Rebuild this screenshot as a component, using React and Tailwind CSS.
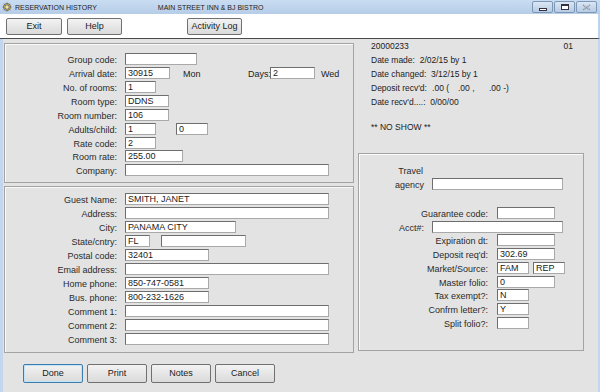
import React from 'react';

const FONT = "font-['Liberation_Sans',Arial,sans-serif]";

// sunken text box, like the old win32 edit control
const Field = ({ w, value = '' }) => (
  <div
    className={`${w} h-[12px] shrink-0 border border-t-[#6e6e6e] border-l-[#6e6e6e] border-b-[#a9a9a9] border-r-[#a9a9a9] bg-white pl-[2px] text-[9px] leading-[10px] text-[#1b1b1b] whitespace-pre overflow-hidden`}
  >
    {value}
  </div>
);

const Row = ({ label, lw = 'w-[112px]', gap = 'ml-[8px]', h = 'h-[14px]', children }) => (
  <div className={`flex ${h} items-start`}>
    <div className={`${lw} shrink-0 pt-[1px] text-right text-[9px] leading-[12px] text-[#2a2a2a] whitespace-nowrap`}>{label}</div>
    <div className={`${gap} flex items-start`}>{children}</div>
  </div>
);

const WinButton = ({ children, size = 'h-[19px] w-[60px]', className = 'border-[#707070]' }) => (
  <button
    type="button"
    className={`flex ${size} items-center justify-center rounded-[2px] border bg-linear-to-b from-[#f3f3f3] to-[#dadada] text-[9px] text-[#1b1b1b] ${className}`}
  >
    {children}
  </button>
);

const TitleIcon = () => (
  <svg width="10" height="10" viewBox="0 0 10 10">
    <circle cx="5" cy="5" r="3.6" fill="#d9b84a" stroke="#7a6420" strokeWidth="0.8" />
    <path d="M5 0.5 V9.5 M0.5 5 H9.5 M1.8 1.8 L8.2 8.2 M8.2 1.8 L1.8 8.2" stroke="#5a6fa8" strokeWidth="0.9" />
    <circle cx="5" cy="5" r="1.5" fill="#f4e29a" />
  </svg>
);

const CaptionBtn = ({ children }) => (
  <div className="flex h-[12px] w-[21px] items-center justify-center rounded-[2px] border border-[#7d97b6] bg-linear-to-b from-[#dbe7f4] to-[#b7cbe3]">
    {children}
  </div>
);

export default function App() {
  return (
    <div className={`${FONT} relative h-[392px] w-[600px] overflow-hidden bg-[#e3e3e3] text-[#222]`}>
      {/* Title bar */}
      <div className="flex h-[14px] items-center bg-linear-to-b from-[#c9dcf1] to-[#b6cde8] pl-[2px] pr-[3px]">
        <TitleIcon />
        <span className="ml-[3px] text-[7px] leading-none text-[#1d1d1d]">RESERVATION HISTORY</span>
        <span className="ml-[61px] text-[7px] leading-none text-[#1d1d1d]">MAIN STREET INN &amp; BJ BISTRO</span>
        <div className="ml-auto flex gap-[1px]">
          <CaptionBtn>
            <div className="mt-[4px] h-[3px] w-[8px] border border-[#334] bg-white" />
          </CaptionBtn>
          <CaptionBtn>
            <div className="h-[6px] w-[8px] border border-[#334] border-t-2 bg-white" />
          </CaptionBtn>
          <CaptionBtn>
            <svg width="9" height="7" viewBox="0 0 9 7">
              <path d="M1 1 L8 6 M8 1 L1 6" stroke="#8d98a8" strokeWidth="1.6" strokeDasharray="1.2 0.6" />
            </svg>
          </CaptionBtn>
        </div>
      </div>

      {/* Toolbar */}
      <div className="flex h-[25px] items-start border-b border-[#4a4a4a] border-r-2 border-r-[#bcd3ec] bg-white pl-[6px] pt-[4px]">
        <WinButton size="h-[17px] w-[56px]">Exit</WinButton>
        <div className="ml-[5px]"><WinButton size="h-[17px] w-[55px]">Help</WinButton></div>
        <div className="ml-[65px]"><WinButton size="h-[17px] w-[55px]">Activity Log</WinButton></div>
      </div>

      {/* Main */}
      <div className="flex h-[353px] flex-col border-l-[3px] border-r-2 border-[#c2d6ed]">
        <div className="flex items-start">
          {/* left column */}
          <div className="ml-[1px] mt-[4px] flex w-[350px] flex-col gap-[3px]">
            <div className="h-[140px] border border-[#a3a3a3] shadow-[inset_1px_1px_0_#fafafa] pt-[9px]">
              <Row label="Group code:"><Field w="w-[72px]" /></Row>
              <Row label="Arrival date:">
                <Field w="w-[45px]" value="30915" />
                <span className="ml-[13px] w-[65px] pt-[1px] text-[9px] leading-[12px]">Mon</span>
                <span className="w-[22px] pt-[1px] text-[9px] leading-[12px]">Days:</span>
                <Field w="w-[45px]" value="2" />
                <span className="ml-[6px] pt-[1px] text-[9px] leading-[12px]">Wed</span>
              </Row>
              <Row label="No. of rooms:"><Field w="w-[31px]" value="1" /></Row>
              <Row label="Room type:"><Field w="w-[44px]" value="DDNS" /></Row>
              <Row label="Room number:"><Field w="w-[44px]" value="106" /></Row>
              <Row label="Adults/child:">
                <Field w="w-[31px]" value="1" />
                <div className="ml-[20px]"><Field w="w-[32px]" value="0" /></div>
              </Row>
              <Row label="Rate code:" h="h-[13px]"><Field w="w-[31px]" value="2" /></Row>
              <Row label="Room rate:"><Field w="w-[58px]" value="255.00" /></Row>
              <Row label="Company:"><Field w="w-[204px]" /></Row>
            </div>

            <div className="h-[167px] border border-[#a3a3a3] shadow-[inset_1px_1px_0_#fafafa] pt-[6px]">
              <Row label="Guest Name:"><Field w="w-[204px]" value="SMITH, JANET" /></Row>
              <Row label="Address:"><Field w="w-[204px]" /></Row>
              <Row label="City:"><Field w="w-[111px]" value="PANAMA CITY" /></Row>
              <Row label="State/cntry:">
                <Field w="w-[25px]" value="FL" />
                <div className="ml-[11px]"><Field w="w-[85px]" /></div>
              </Row>
              <Row label="Postal code:"><Field w="w-[84px]" value="32401" /></Row>
              <Row label="Email address:"><Field w="w-[204px]" /></Row>
              <Row label="Home phone:"><Field w="w-[84px]" value="850-747-0581" /></Row>
              <Row label="Bus. phone:"><Field w="w-[84px]" value="800-232-1626" /></Row>
              <Row label="Comment 1:"><Field w="w-[204px]" /></Row>
              <Row label="Comment 2:"><Field w="w-[204px]" /></Row>
              <Row label="Comment 3:"><Field w="w-[204px]" /></Row>
            </div>
          </div>

          {/* right column */}
          <div className="ml-[4px] flex w-[226px] flex-col">
            <div className="h-[114px] pl-[13px] text-[8.5px] leading-[14px] text-[#222]">
              <div className="flex">
                <span>20000233</span>
                <span className="ml-auto mr-[11px]">01</span>
              </div>
              <div className="whitespace-pre">Date made:  2/02/15 by 1</div>
              <div className="whitespace-pre">Date changed:  3/12/15 by 1</div>
              <div className="flex whitespace-pre">
                <span className="w-[54px]">Deposit recv'd:</span>
                <span className="w-[33px]">   .00 (</span>
                <span className="w-[31px]">.00 ,</span>
                <span>.00 -)</span>
              </div>
              <div className="whitespace-pre">Date recv'd....:  0/00/00</div>
              <div className="mt-[11px]">** NO SHOW **</div>
            </div>

            <div className="h-[198px] border border-[#a3a3a3] shadow-[inset_1px_1px_0_#fafafa] pt-[10px]">
              <div className="flex h-[28px] items-start">
                <div className="w-[65px] shrink-0 text-right text-[9px] leading-[14px] text-[#2a2a2a]">
                  <div className="pr-[1px]">Travel</div>
                  <div>agency</div>
                </div>
                <div className="ml-[8px] mt-[14px]"><Field w="w-[131px]" /></div>
              </div>
              <div className="mt-[15px]">
                <Row label="Guarantee code:" lw="w-[129px]" gap="ml-[9px]"><Field w="w-[58px]" /></Row>
                <Row label="Acct#:" lw="w-[65px]" gap="ml-[8px]" h="h-[13px]"><Field w="w-[131px]" /></Row>
                <Row label="Expiration dt:" lw="w-[129px]" gap="ml-[9px]"><Field w="w-[58px]" /></Row>
                <Row label="Deposit req'd:" lw="w-[129px]" gap="ml-[9px]"><Field w="w-[58px]" value="302.69" /></Row>
                <Row label="Market/Source:" lw="w-[129px]" gap="ml-[9px]">
                  <Field w="w-[32px]" value="FAM" />
                  <div className="ml-[4px]"><Field w="w-[32px]" value="REP" /></div>
                </Row>
                <Row label="Master folio:" lw="w-[129px]" gap="ml-[9px]" h="h-[13px]"><Field w="w-[58px]" value="0" /></Row>
                <Row label="Tax exempt?:" lw="w-[129px]" gap="ml-[9px]"><Field w="w-[32px]" value="N" /></Row>
                <Row label="Confrm letter?:" lw="w-[129px]" gap="ml-[9px]"><Field w="w-[32px]" value="Y" /></Row>
                <Row label="Split folio?:" lw="w-[129px]" gap="ml-[9px]"><Field w="w-[32px]" /></Row>
              </div>
            </div>
          </div>
        </div>

        {/* bottom buttons */}
        <div className="ml-[20px] mt-[11px] flex gap-[4px]">
          <WinButton className="border-[#3d7bad] shadow-[inset_0_0_0_1px_#bfe3f7]">Done</WinButton>
          <WinButton>Print</WinButton>
          <WinButton>Notes</WinButton>
          <WinButton>Cancel</WinButton>
        </div>
      </div>
    </div>
  );
}
